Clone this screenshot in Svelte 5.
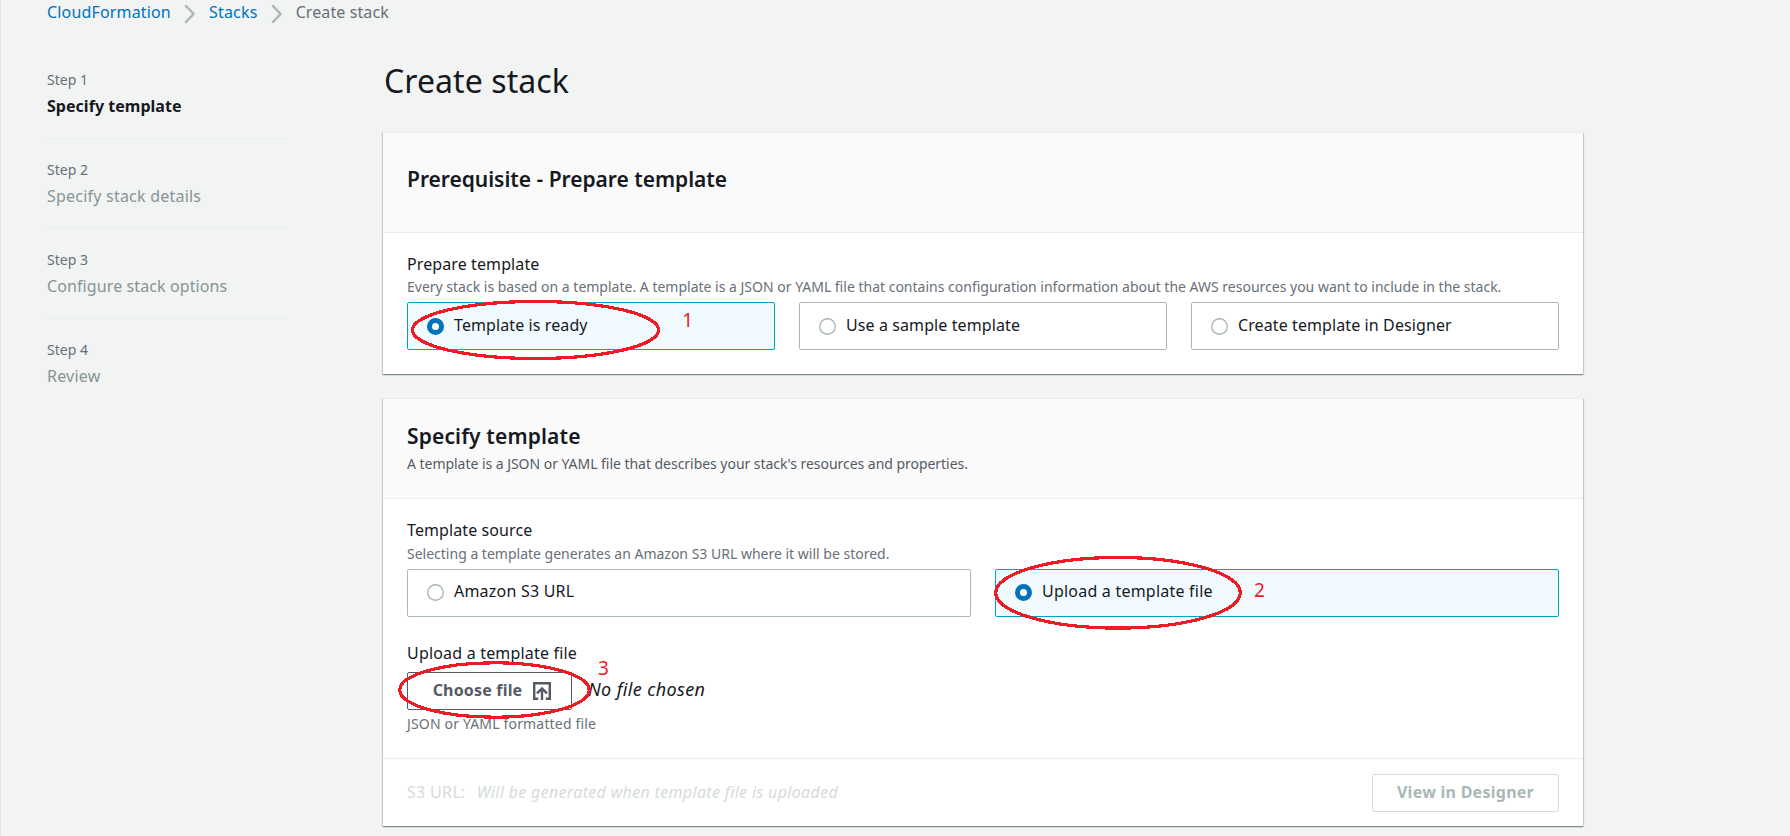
<script>
  const steps = [
    { label: 'Step 1', title: 'Specify template', active: true },
    { label: 'Step 2', title: 'Specify stack details', wide: true },
    { label: 'Step 3', title: 'Configure stack options' },
    { label: 'Step 4', title: 'Review', wide: true }
  ];
  const prepare = ['Template is ready', 'Use a sample template', 'Create template in Designer'];
  const sources = ['Amazon S3 URL', 'Upload a template file'];
  let prepared = $state(0);
  let source = $state(1);
</script>

{#snippet chevron()}
  <svg class="chevron" width="12" height="20" viewBox="0 0 12 20" fill="none" stroke="#aab7b8" stroke-width="2.5" stroke-linecap="round" stroke-linejoin="round"><path d="M2 2 9.6 10 2 18" /></svg>
{/snippet}

{#snippet tile(text, selected, pick)}
  <button class="tile" class:selected onclick={pick}>
    <span class="radio"></span>
    <span>{text}</span>
  </button>
{/snippet}

<div class="page">
  <nav class="crumbs">
    <a class="root" href="#cf">CloudFormation</a>{@render chevron()}<a class="wide" href="#stacks">Stacks</a>{@render chevron()}<span>Create stack</span>
  </nav>

  <div class="columns">
    <aside>
      {#each steps as s}
        <div class="step" class:active={s.active}>
          <small>{s.label}</small>
          <div class="title" class:wide={s.wide}>{s.title}</div>
        </div>
      {/each}
    </aside>

    <main>
      <h1>Create stack</h1>

      <section class="card">
        <header class="first"><h2>Prerequisite - Prepare template</h2></header>
        <div class="body prepare">
          <div class="label">Prepare template</div>
          <div class="desc">Every stack is based on a template. A template is a JSON or YAML file that contains configuration information about the AWS resources you want to include in the stack.</div>
          <div class="tiles three">
            {#each prepare as p, i}{@render tile(p, prepared === i, () => (prepared = i))}{/each}
          </div>
        </div>
      </section>

      <section class="card">
        <header>
          <h2 class="wide">Specify template</h2>
          <div class="desc dark">A template is a JSON or YAML file that describes your stack's resources and properties.</div>
        </header>
        <div class="body source">
          <div class="label">Template source</div>
          <div class="desc">Selecting a template generates an Amazon S3 URL where it will be stored.</div>
          <div class="tiles two">
            {#each sources as s, i}{@render tile(s, source === i, () => (source = i))}{/each}
          </div>
          <div class="label upload">Upload a template file</div>
          <div class="file">
            <button class="btn">
              Choose file
              <svg width="18" height="18" viewBox="0 0 18 18" fill="none" stroke="#545b64" stroke-width="2.4"><path d="M5.2 16.8H1.2V1.2h15.6v15.6h-4" /><path d="M9 18V6.3M4 11.4 9 6.4l5 5" /></svg>
            </button>
            <em>No file chosen</em>
          </div>
          <div class="desc hint">JSON or YAML formatted file</div>
        </div>
        <footer>
          <div class="url"><span>S3 URL:</span><em>Will be generated when template file is uploaded</em></div>
          <button class="btn disabled" disabled>View in Designer</button>
        </footer>
      </section>
    </main>
  </div>

  <svg class="marks" width="1790" height="836" viewBox="0 0 1790 836">
    <g fill="none" stroke="#ed1c24" stroke-width="3.2" shape-rendering="crispEdges">
      <ellipse cx="535.5" cy="330" rx="123" ry="28.5" />
      <ellipse cx="1118" cy="592.8" rx="122.3" ry="35.3" />
      <ellipse cx="494.5" cy="690" rx="94.7" ry="27.2" />
    </g>
    <g fill="#ed1c24" font-size="19">
      <text x="682.3" y="327.3">1</text>
      <text x="1254" y="597.3">2</text>
      <text x="598" y="674.7">3</text>
    </g>
  </svg>
</div>

<style>
  :global(body) { background: #f2f3f3; overflow: hidden; }
  .page {
    position: relative;
    box-sizing: border-box;
    width: 1790px;
    height: 836px;
    overflow: hidden;
    padding-left: 46px;
    border-left: 1px solid #e6e8e8;
    background: #f2f3f3;
    color: #16191f;
    font: 16px/22px "Noto Sans", sans-serif;
    letter-spacing: 0.1px;
  }
  button { font: inherit; letter-spacing: inherit; color: inherit; margin: 0; }
  .crumbs { display: flex; align-items: center; height: 24px; color: #687078; }
  .crumbs a { color: #0073bb; text-decoration: none; }
  .crumbs .root { letter-spacing: 0.16px; }
  .chevron { margin: 3px 13px 0 13px; }
  .wide { letter-spacing: 0.22px; }

  .columns { display: flex; }
  aside { width: 240px; padding-top: 45px; margin-right: 96px; }
  .step { padding-bottom: 21px; margin-bottom: 20px; border-bottom: 1px solid #eaeded; }
  .step:last-child { border: 0; }
  small { display: block; font-size: 14px; color: #687078; margin-bottom: 4px; letter-spacing: 0; }
  .title { color: #879596; }
  .active .title { color: #16191f; font-weight: 700; letter-spacing: 0.03px; }

  main { width: 1200px; }
  h1 { margin: 37px 0 31px 1px; font-size: 32px; line-height: 40px; font-weight: 400; letter-spacing: 0.08px; }
  .card {
    background: #fff;
    margin-bottom: 24px;
    box-shadow: 0 1px 1px 0 rgba(0, 28, 36, 0.3), 1px 1px 1px 0 rgba(0, 28, 36, 0.15), -1px 1px 1px 0 rgba(0, 28, 36, 0.15);
    border-top: 1px solid #eaeded;
    box-sizing: border-box;
  }
  header {
    box-sizing: border-box;
    height: 100px;
    padding: 22px 24px 0;
    background: #fafafa;
    border-bottom: 1px solid #eaeded;
  }
  header.first { padding-top: 31px; }
  h2 { margin: 0; font-size: 21px; line-height: 30px; font-weight: 600; letter-spacing: -0.03px; }
  h2.wide { letter-spacing: 0.14px; }
  .desc { font-size: 14px; color: #687078; letter-spacing: 0; white-space: nowrap; }
  .dark { color: #545b64; margin-top: 2px; letter-spacing: -0.035px; }
  .body { padding: 20px 24px 0; }
  .prepare .desc { margin-top: 1px; }
  .source .desc { margin-top: 2px; }
  .tiles { display: grid; gap: 24px; margin-top: 4px; }
  .three { grid-template-columns: repeat(3, 1fr); }
  .two { grid-template-columns: repeat(2, 1fr); }
  .tile {
    display: flex;
    align-items: flex-start;
    box-sizing: border-box;
    height: 48px;
    padding: 11px 19px;
    border: 1px solid #aab7b8;
    border-radius: 2px;
    background: #fff;
    text-align: left;
  }
  .two .tile { padding-top: 10px; letter-spacing: 0.22px; }
  .tile.selected { border-color: #00a1c9; background: #f1faff; }
  .radio {
    box-sizing: border-box;
    width: 17px;
    height: 17px;
    margin: 4px 10px 0 0;
    border-radius: 50%;
    background: #fff;
    box-shadow: inset 0 0 0 1.4px #aab7b8;
  }
  .selected .radio { box-shadow: none; border: 5px solid #0073bb; }
  .prepare { padding-bottom: 24px; }
  .upload { margin-top: 25px; letter-spacing: 0.19px; }
  .file { display: flex; align-items: center; margin-top: 8px; }
  .file em { font-size: 18px; line-height: 18px; letter-spacing: 0.38px; margin: 0 0 4px 16px; }
  .btn {
    display: flex;
    align-items: center;
    justify-content: center;
    box-sizing: border-box;
    height: 38px;
    padding: 0 19px 2px 24px;
    border: 1px solid #545b64;
    border-radius: 2px;
    background: #fff;
    color: #545b64;
    font-weight: 700;
    letter-spacing: 0.18px;
  }
  .file .btn { width: 165px; }
  .btn svg { margin: 2px 0 0 11px; }
  .source .hint { margin-top: 3px; letter-spacing: 0.17px; }
  footer {
    display: flex;
    justify-content: space-between;
    align-items: flex-start;
    box-sizing: border-box;
    height: 68px;
    margin-top: 23px;
    padding: 15px 24px 0;
    border-top: 1px solid #eaeded;
  }
  .url { display: flex; gap: 11px; margin-top: 7px; color: #d5dbdb; letter-spacing: 0.33px; }
  .disabled { width: 187px; padding: 0 0 2px; border-color: #d5dbdb; color: #aab7b8; letter-spacing: 0.26px; }
  .marks { position: absolute; left: -1px; top: 0; pointer-events: none; letter-spacing: 0; }
</style>
